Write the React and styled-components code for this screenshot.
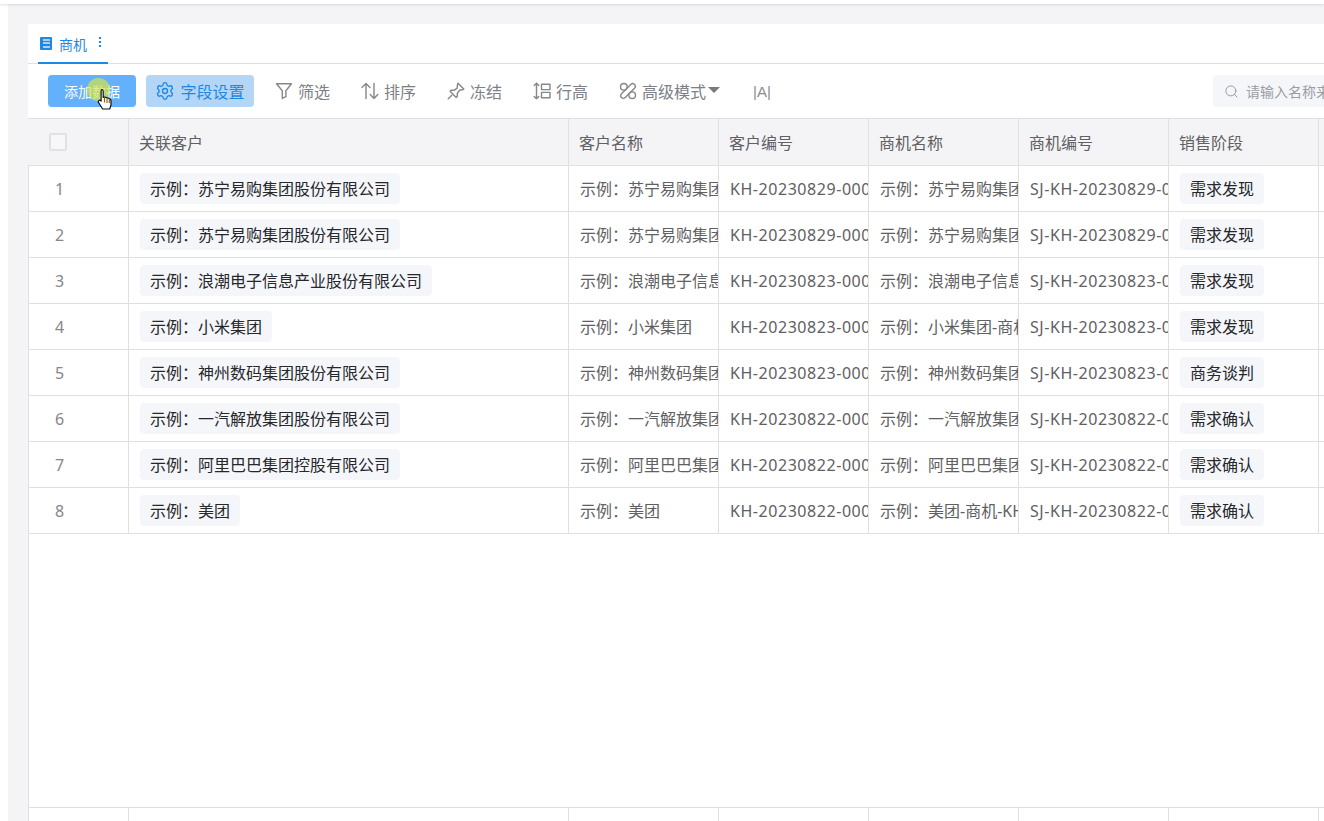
import React from 'react';
import styled, { createGlobalStyle } from 'styled-components';
import { Search, Settings } from 'lucide-react';

const GlobalStyle = createGlobalStyle`
    html, body {
        margin: 0;
        padding: 0;
        background: #fff;
    }
    body {
        font-family: "Noto Sans", "Noto Sans CJK SC", sans-serif;
    }
`;

const rows = [
    { customer: '示例：苏宁易购集团股份有限公司', code: 'KH-20230829-0002', stage: '需求发现' },
    { customer: '示例：苏宁易购集团股份有限公司', code: 'KH-20230829-0001', stage: '需求发现' },
    { customer: '示例：浪潮电子信息产业股份有限公司', code: 'KH-20230823-0004', stage: '需求发现' },
    { customer: '示例：小米集团', code: 'KH-20230823-0003', stage: '需求发现' },
    { customer: '示例：神州数码集团股份有限公司', code: 'KH-20230823-0002', stage: '商务谈判' },
    { customer: '示例：一汽解放集团股份有限公司', code: 'KH-20230822-0003', stage: '需求确认' },
    { customer: '示例：阿里巴巴集团控股有限公司', code: 'KH-20230822-0002', stage: '需求确认' },
    { customer: '示例：美团', code: 'KH-20230822-0001', stage: '需求确认' },
];

const headers = ['关联客户', '客户名称', '客户编号', '商机名称', '商机编号', '销售阶段'];

const strip = (name) => name.replace(/股份有限公司|控股有限公司|产业股份有限公司/, '');

const IconBase = ({ children }) => (
    <svg width="18" height="18" viewBox="0 0 18 18" fill="none" stroke="currentColor" strokeWidth="1.4" strokeLinecap="round" strokeLinejoin="round">
        {children}
    </svg>
);

const FilterIcon = () => (
    <IconBase>
        <path d="M1.5 1.8h15l-5.6 7v6l-1 .2-2.6 1.4V8.8z" />
    </IconBase>
);

const SortIcon = () => (
    <IconBase>
        <path d="M5 16.5V1.5M1 5.5l4-4 4 4" />
        <path d="M13 1.5v15M9.2 12.5l3.8 4 3.8-4" />
    </IconBase>
);

const PinIcon = () => (
    <IconBase>
        <path d="M11 1.2l5.8 5.8-1.6.8-2.8.5-2.2 3.4.2 2.5-1.2 1.2-6.1-6.1 1.2-1.2 2.6.2 3.3-2.2.2-3.1z" />
        <path d="M4.8 13.2L1.2 16.8" />
    </IconBase>
);

const RowHeightIcon = () => (
    <IconBase>
        <path d="M3.5 1.2v15.6M1.2 3.6l2.3-2.4 2.3 2.4M1.2 14.4l2.3 2.4 2.3-2.4" />
        <rect x="8.5" y="2.2" width="8.5" height="5.4" />
        <rect x="8.5" y="10.4" width="8.5" height="5.4" />
    </IconBase>
);

const AdvancedIcon = () => (
    <IconBase>
        <circle cx="4.8" cy="4.8" r="3.3" />
        <circle cx="13.2" cy="13.2" r="3.3" />
        <rect x="-0.2" y="6.4" width="18.4" height="5.2" rx="2.6" transform="rotate(-45 9 9)" />
    </IconBase>
);

const HandCursor = () => (
    <svg width="17" height="24" viewBox="0 0 17 24">
        <path
            d="M4.5 1.5c1 0 1.7.7 1.7 1.7v6.2l1.2-.4 1.4.3 1.3.5 1.4.3 1.6.9c.6.4.9 1 .9 1.7v4.3l-1.3 4H5.6L1.7 14.8c-.6-.9-.5-1.9.2-2.3.7-.5 1.6-.2 2.2.5V3.2c0-1 .4-1.7.4-1.7z"
            fill="#fff"
            stroke="#111"
            strokeWidth="1.2"
            strokeLinejoin="round"
        />
        <path d="M7.5 9.5v5M10 10v5M12.3 10.8v4.2" stroke="#8a5a10" strokeWidth="1.1" />
    </svg>
);

const App = () => {
    return (
        <Page>
            <GlobalStyle />
            <TopBar />
            <Content>
                <Card>
                    <TabBar>
                        <Tab>
                            <TabIcon>
                                <i /><i /><i />
                            </TabIcon>
                            商机
                            <TabMore>
                                <i /><i /><i />
                            </TabMore>
                        </Tab>
                    </TabBar>
                    <Toolbar>
                        <AddButton>
                            添加数据
                            <ClickHalo />
                            <CursorSpot><HandCursor /></CursorSpot>
                        </AddButton>
                        <FieldButton>
                            <Settings size={20} strokeWidth={1.6} />
                            字段设置
                        </FieldButton>
                        <ToolGroup>
                            <ToolItem><FilterIcon />筛选</ToolItem>
                            <ToolItem><SortIcon />排序</ToolItem>
                            <ToolItem><PinIcon />冻结</ToolItem>
                            <ToolItem><RowHeightIcon />行高</ToolItem>
                            <ToolItem>
                                <AdvancedIcon />
                                <span>高级模式</span>
                                <Caret />
                            </ToolItem>
                            <FontSizeMark>|A|</FontSizeMark>
                        </ToolGroup>
                        <SearchBox>
                            <Search size={15} strokeWidth={1.4} />
                            请输入名称来搜索
                        </SearchBox>
                    </Toolbar>
                    <Table>
                        <HeadRow>
                            <HeadCell $center>
                                <CheckBox />
                            </HeadCell>
                            {headers.map((title) => (
                                <HeadCell key={title}>{title}</HeadCell>
                            ))}
                            <HeadCell />
                        </HeadRow>
                        {rows.map((row, index) => {
                            const short = strip(row.customer);
                            return (
                                <BodyRow key={index}>
                                    <NumberCell>{index + 1}</NumberCell>
                                    <Cell><Chip>{row.customer}</Chip></Cell>
                                    <TextCell>{short}</TextCell>
                                    <CodeCell>{row.code}</CodeCell>
                                    <TextCell>{short}-商机-{row.code}</TextCell>
                                    <CodeCell>SJ-{row.code}</CodeCell>
                                    <Cell><Chip>{row.stage}</Chip></Cell>
                                    <Cell />
                                </BodyRow>
                            );
                        })}
                        <Spacer />
                        <FootRow>
                            {Array.from({ length: 8 }).map((_, i) => (
                                <Cell key={i} />
                            ))}
                        </FootRow>
                    </Table>
                </Card>
            </Content>
        </Page>
    );
};

export default App;

const columns = '100px 440px repeat(5, 150px) 1fr';
const lineColor = '#e0e0e3';

const Page = styled.div`
    width: 1324px;
    height: 821px;
    overflow: hidden;
    display: flex;
    flex-direction: column;
    background: #fff;
`;

const TopBar = styled.div`
    height: 4px;
    flex: none;
    background: #fff;
    box-shadow: 0 1px 3px rgba(0, 0, 0, 0.12);
    position: relative;
`;

const Content = styled.div`
    flex: 1;
    min-height: 0;
    margin-left: 8px;
    padding: 20px 0 0 20px;
    background: #f4f4f6;
    display: flex;
`;

const Card = styled.div`
    width: 1405px;
    flex: none;
    background: #fff;
    display: flex;
    flex-direction: column;
`;

const TabBar = styled.div`
    height: 40px;
    flex: none;
    box-sizing: border-box;
    padding-left: 10px;
    border-bottom: 1px solid ${lineColor};
    display: flex;
`;

const Tab = styled.div`
    width: 70px;
    height: 40px;
    box-sizing: border-box;
    padding: 2px 0 0 2px;
    display: flex;
    align-items: center;
    gap: 7px;
    font-size: 14px;
    color: #1e88e5;
    border-bottom: 2px solid #1e88e5;
`;

const TabIcon = styled.span`
    width: 12px;
    height: 13px;
    margin-top: -2px;
    box-sizing: border-box;
    padding: 2px 2px 2px 3px;
    background: #1e88e5;
    border-radius: 1px;
    display: flex;
    flex-direction: column;
    justify-content: space-between;

    i {
        display: block;
        height: 2px;
        background: #a8d0f5;
    }
`;

const TabMore = styled.span`
    margin-left: 5px;
    margin-top: -4px;
    display: flex;
    flex-direction: column;
    gap: 2px;

    i {
        display: block;
        width: 2px;
        height: 2px;
        background: #1e88e5;
    }
`;

const Toolbar = styled.div`
    height: 54px;
    flex: none;
    box-sizing: border-box;
    padding: 0 20px;
    display: flex;
    align-items: center;
`;

const ActionButton = styled.div`
    height: 32px;
    box-sizing: border-box;
    border-radius: 4px;
    display: flex;
    align-items: center;
    justify-content: center;
`;

const AddButton = styled(ActionButton)`
    position: relative;
    width: 88px;
    background: #63b0fd;
    color: #fff;
    font-size: 14px;
`;

const ClickHalo = styled.span`
    position: absolute;
    left: 39px;
    top: 3px;
    width: 23px;
    height: 23px;
    border-radius: 50%;
    background: rgba(210, 228, 72, 0.7);
`;

const CursorSpot = styled.span`
    position: absolute;
    left: 49px;
    top: 13px;
    line-height: 0;
`;

const FieldButton = styled(ActionButton)`
    width: 108px;
    margin-left: 10px;
    gap: 5px;
    background: #b3d6f6;
    color: #1e88e5;
    font-size: 16px;
`;

const ToolGroup = styled.div`
    margin-left: 21px;
    display: flex;
    align-items: center;
    gap: 31px;
`;

const ToolItem = styled.div`
    display: flex;
    align-items: center;
    gap: 5px;
    font-size: 16px;
    color: #7d8087;

    svg {
        color: #85878a;
    }
`;

const Caret = styled.i`
    width: 0;
    height: 0;
    margin-left: -3px;
    margin-top: -3px;
    border-left: 6px solid transparent;
    border-right: 6px solid transparent;
    border-top: 6px solid #77797d;
`;

const FontSizeMark = styled.span`
    margin-left: 2px;
    font-family: "Liberation Sans", sans-serif;
    font-size: 15px;
    color: #8a8c90;
`;

const SearchBox = styled.div`
    width: 200px;
    height: 32px;
    margin-left: auto;
    box-sizing: border-box;
    padding-left: 11px;
    border-radius: 4px;
    background: #f5f6fa;
    display: flex;
    align-items: center;
    gap: 7px;
    font-size: 14px;
    color: #9a9da3;
    white-space: nowrap;

    svg {
        flex: none;
        color: #8d9096;
    }
`;

const Table = styled.div`
    flex: 1;
    min-height: 0;
    display: flex;
    flex-direction: column;
    border-left: 1px solid ${lineColor};
    border-top: 1px solid ${lineColor};
    font-size: 16px;
    line-height: 22px;
`;

const RowBase = styled.div`
    display: grid;
    grid-template-columns: ${columns};
    flex: none;
    margin-left: -1px;
`;

const HeadRow = styled(RowBase)`
    height: 47px;
    box-sizing: border-box;
    padding-left: 1px;
    background: #f4f4f6;
    border-bottom: 1px solid ${lineColor};
`;

const HeadCell = styled.div`
    display: flex;
    align-items: center;
    justify-content: ${(props) => (props.$center ? 'center' : 'flex-start')};
    padding-top: ${(props) => (props.$center ? '0' : '2px')};
    padding-left: ${(props) => (props.$center ? '0' : '10px')};
    padding-right: ${(props) => (props.$center ? '41px' : '0')};
    border-right: 1px solid ${lineColor};
    color: #5f6063;
    min-width: 0;
`;

const CheckBox = styled.span`
    width: 18px;
    height: 18px;
    box-sizing: border-box;
    border: 2px solid #dfe1e6;
    border-radius: 2px;
    background: #f7f7f8;
`;

const BodyRow = styled(RowBase)`
    height: 46px;
    box-sizing: border-box;
    padding-left: 1px;
    border-bottom: 1px solid ${lineColor};
`;

const FootRow = styled(RowBase)`
    height: 14px;
    box-sizing: border-box;
    padding-left: 1px;
    border-top: 1px solid ${lineColor};
`;

const Spacer = styled.div`
    flex: 1;
`;

const Cell = styled.div`
    display: flex;
    align-items: center;
    box-sizing: border-box;
    padding-left: 11px;
    border-right: 1px solid ${lineColor};
    overflow: hidden;
    white-space: nowrap;
    min-width: 0;
`;

const TextCell = styled(Cell)`
    color: #5f6063;
`;

const CodeCell = styled(TextCell)`
    letter-spacing: 0.55px;
`;

const NumberCell = styled(Cell)`
    justify-content: center;
    padding: 0 38px 0 0;
    color: #85878a;
`;

const Chip = styled.span`
    height: 31px;
    box-sizing: border-box;
    padding: 0 10px;
    border-radius: 4px;
    background: #f5f6fa;
    color: #26272a;
    display: flex;
    align-items: center;
`;
